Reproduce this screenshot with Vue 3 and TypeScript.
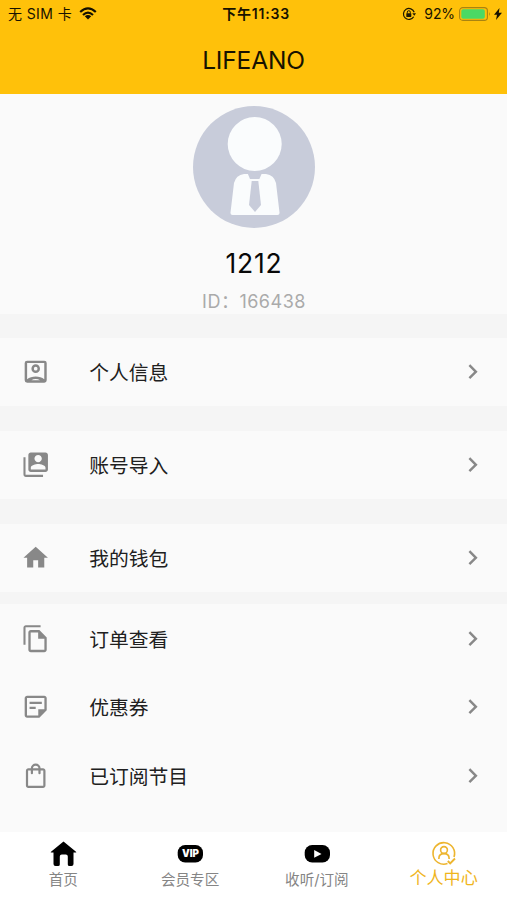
<script setup lang="ts">
type IconName = 'account' | 'accounts' | 'home' | 'orders' | 'coupon' | 'bag'
interface Item { label: string; icon: IconName }

const groups: Item[][] = [
  [{ label: '个人信息', icon: 'account' }],
  [{ label: '账号导入', icon: 'accounts' }],
  [{ label: '我的钱包', icon: 'home' }],
  [
    { label: '订单查看', icon: 'orders' },
    { label: '优惠券', icon: 'coupon' },
    { label: '已订阅节目', icon: 'bag' },
  ],
]

const icons: Record<IconName, string> = {
  account:
    'M19 3H5a2 2 0 0 0-2 2v14a2 2 0 0 0 2 2h14a2 2 0 0 0 2-2V5a2 2 0 0 0-2-2zM8.5 19c1-.65 2.2-1 3.5-1s2.500.35 3.500 1zM19 18.100C17.200 16.800 14.700 16 12 16s-5.200.8-7 2.100V5h14zM12 13a3.500 3.500 0 1 0 0-7 3.500 3.500 0 0 0 0 7zm0-5a1.500 1.500 0 1 1 0 3 1.500 1.500 0 0 1 0-3z',
  accounts:
    'M3.700 6H2v14c0 1.100.9 2 2 2h14v-1.700H3.700zM20 2H8c-1.100 0-2 .9-2 2v12c0 1.100.9 2 2 2h12c1.100 0 2-.9 2-2V4c0-1.100-.9-2-2-2zm-6 2c1.660 0 3 1.340 3 3s-1.340 3-3 3-3-1.340-3-3 1.340-3 3-3zm6 12H8v-1.500c0-1.990 4-3 6-3s6 1.010 6 3z',
  home: 'M10 20v-6h4v6h5v-8h3L12 3 2 12h3v8z',
  orders:
    'M16 1H4C2.900 1 2 1.900 2 3v14h1.700V2.700H16zM15 5H8c-1.100 0-2 .9-2 2v14c0 1.100.9 2 2 2h11c1.100 0 2-.9 2-2V11zM7.900 21.100V6.900H14V12h5.100v9.100z',
  coupon:
    'M19 3H5c-1.100 0-2 .9-2 2v14c0 1.100.9 2 2 2h10l6-6V5c0-1.100-.9-2-2-2zM4.900 19.100V4.900h14.200V14h-5v5.100zM7 8h10v1.800H7zM7 12h5v1.800H7z',
  bag:
    'M18 6h-2a4 4 0 0 0-8 0H6c-1.100 0-2 .9-2 2v12c0 1.100.9 2 2 2h12c1.100 0 2-.9 2-2V8c0-1.100-.9-2-2-2zM12 3.800a2.200 2.200 0 0 1 2.200 2.200H9.800a2.200 2.200 0 0 1 2.200-2.200zM18.200 20.200H5.800V7.800H8V10a.9.9 0 0 0 1.800 0V7.800h4.400V10a.9.9 0 0 0 1.800 0V7.800h2.200z',
}
</script>

<template>
  <div class="screen">
    <header class="header">
      <div class="status">
        <div class="status-left">
          <span class="carrier">无 SIM 卡</span>
          <svg class="wifi" viewBox="0 0 18 13">
            <g fill="none" stroke="#141000" stroke-width="2.200">
              <path d="M1.200 5Q9-2.200 16.800 5" />
              <path d="M4 8Q9 3.400 14 8" />
            </g>
            <path d="M5.800 9.300Q9 6.900 12.200 9.300L9 12.500z" fill="#141000" />
          </svg>
        </div>
        <div class="clock">下午11:33</div>
        <div class="status-right">
          <svg class="lock" viewBox="0 0 14 14">
            <path d="M11.700 9.800A5.500 5.500 0 1 1 12.200 5.300" fill="none" stroke="#1c1600" stroke-width="1.200" />
            <path d="M10.300 6.300h3.700l-1.700 2.500z" fill="#1c1600" />
            <rect x="4.300" y="6.300" width="5" height="3.700" rx=".4" fill="#1c1600" />
            <path d="M5.300 6.500V5.200a1.500 1.500 0 0 1 3 0v1.300" fill="none" stroke="#1c1600" stroke-width="1" />
          </svg>
          <span class="percent">92%</span>
          <svg class="battery" viewBox="0 0 32 14">
            <rect x=".6" y=".6" width="27.800" height="12.800" rx="3.200" fill="none" stroke="#a98311" stroke-width="1.100" />
            <rect x="2.300" y="2.200" width="23.500" height="9.600" rx="1.800" fill="#4bd964" />
            <path d="M30 5q1.700 2 0 4z" fill="#a98311" />
          </svg>
          <svg class="bolt" viewBox="0 0 8 12"><path d="M5.500 0 0 6.800h3L2 12l6-7.200H4.800z" fill="#171200" /></svg>
        </div>
      </div>
      <h1 class="title">LIFEANO</h1>
    </header>

    <section class="profile">
      <svg class="avatar" viewBox="0 0 122 122">
        <circle cx="61" cy="61" r="61" fill="#c8ccda" />
        <circle cx="61.700" cy="38" r="27" fill="#fafcfd" />
        <path d="M51 68q-8 1-10 9l-3.500 29.500q-.3 2.500 2 2.500h45q2.300 0 2-2.500L83 77q-2-8-10-9z" fill="#fafcfd" />
        <path d="M54.500 67h14.500l-2.600 6H57z" fill="#c8ccda" />
        <path d="M58.700 75h6.600l2.700 24-6 7-6-7z" fill="#c8ccda" />
      </svg>
      <div class="name">1212</div>
      <div class="user-id">ID：166438</div>
    </section>

    <main class="menu">
      <section v-for="(group, i) in groups" :key="i" class="group">
        <div v-for="item in group" :key="item.label" class="row">
          <svg class="row-icon" viewBox="0 0 24 24"><path :d="icons[item.icon]" fill-rule="evenodd" /></svg>
          <span class="row-label">{{ item.label }}</span>
          <svg class="chevron" viewBox="0 0 24 24">
            <path d="M10 6 8.590 7.410 13.170 12l-4.580 4.590L10 18l6-6z" />
          </svg>
        </div>
      </section>
    </main>

    <nav class="tabs">
      <div class="tab">
        <svg class="tab-icon" viewBox="0 0 28 28">
          <path d="M14.500 1.500 27 11.700q.8.900-.4.900H24.500V24q0 2-2 2h-2q-1.700 0-1.700-1.500V16.500q0-2-2-2h-4q-2 0-2 2v8q0 1.500-1.700 1.500H6.500q-2 0-2-2V12.600H2.400q-1.200 0-.4-.9z" />
        </svg>
        <span>首页</span>
      </div>
      <div class="tab">
        <svg class="tab-icon" viewBox="0 0 28 28">
          <rect x="1.700" y="5" width="25.300" height="17.500" rx="7.500" />
          <text class="vip" x="14.400" y="17.300" text-anchor="middle" textLength="17" lengthAdjust="spacingAndGlyphs">VIP</text>
        </svg>
        <span>会员专区</span>
      </div>
      <div class="tab">
        <svg class="tab-icon" viewBox="0 0 28 28">
          <rect x="1.700" y="5" width="25.300" height="17.500" rx="7.500" />
          <path d="m11.200 10 7.300 3.900-7.300 3.900z" fill="#fff" />
        </svg>
        <span>收听/订阅</span>
      </div>
      <div class="tab active">
        <svg class="tab-icon" viewBox="0 0 28 28" fill="none" stroke="#edb52f" stroke-width="1.600">
          <path d="M17.500 23.600A10.800 10.800 0 1 1 24 17" />
          <circle cx="14" cy="10" r="3.400" />
          <path d="M8.900 19v-.7q0-4.700 5.100-4.700t5.100 4.700v.7" />
          <path d="m17.800 21 2.400 2.500 4.800-5" stroke-width="1.900" />
        </svg>
        <span>个人中心</span>
      </div>
    </nav>
  </div>
</template>

<style>
body { background: #fafafa; }
</style>

<style scoped>
.screen {
  width: 507px;
  height: 900px;
  display: flex;
  flex-direction: column;
  overflow: hidden;
  background: #fafafa;
  font-family: Inter, "Noto Sans CJK SC", sans-serif;
  color: #202020;
}
.header { height: 93.500px; flex: none; background: #ffc10a; color: #171200; }
.status {
  height: 27px;
  display: grid;
  grid-template-columns: 1fr auto 1fr;
  align-items: center;
  padding: 0 5px 0 8px;
  font-size: 14px;
  line-height: 20px;
}
.status-left, .status-right { display: flex; align-items: center; }
.status-right { justify-content: flex-end; }
.carrier { letter-spacing: .4px; }
.wifi { width: 18px; height: 13px; margin-left: 6.500px; }
.clock { font-weight: 600; letter-spacing: .8px; margin-left: 2px; }
.lock { width: 14px; height: 14px; margin-right: 8px; }
.percent { letter-spacing: -.1px; }
.battery { width: 32px; height: 14px; margin: 0 3px 0 4px; }
.bolt { width: 8px; height: 12px; }
.title { margin: 15px 0 0; text-align: center; font-weight: 400; font-size: 24.500px; line-height: 36px; letter-spacing: -.15px; }

.profile {
  height: 220px;
  flex: none;
  display: flex;
  flex-direction: column;
  align-items: center;
  padding-top: 12.500px;
  box-sizing: border-box;
}
.avatar { width: 122px; height: 122px; flex: none; }
.name { margin-top: 16px; padding-left: 1px; font-size: 26.500px; line-height: 38px; letter-spacing: .8px; color: #080808; }
.user-id { margin-top: 7px; padding-left: 1px; font-size: 18px; line-height: 26px; letter-spacing: .5px; color: #aaa; white-space: nowrap; }

.menu { flex: 1; min-height: 0; display: flex; flex-direction: column; padding-top: 24.200px; box-sizing: border-box; background: #f5f5f5; }
.group { flex: none; margin-bottom: 24.500px; background: #fafafa; }
.group:nth-child(3) { margin-bottom: 12.100px; }
.group:last-child { flex: 1; margin-bottom: 0; }
.row { height: 68.500px; display: flex; align-items: center; padding: 0 19.500px 0 20.600px; }
.row-icon, .chevron { width: 29.400px; height: 29.400px; flex: none; fill: #888; }
.row-label { flex: 1; margin-left: 39.200px; padding-top: 2px; font-size: 19.800px; line-height: 28px; }

.tabs { height: 68px; flex: none; display: grid; grid-template-columns: repeat(4, 1fr); background: #fff; }
.tab { display: flex; flex-direction: column; align-items: center; padding-top: 8px; font-size: 14.600px; line-height: 22px; color: #858585; }
.tab-icon { width: 28px; height: 28px; flex: none; }
.tab span { margin-top: 1px; white-space: nowrap; }
.vip { font: 900 10px Inter, sans-serif; fill: #fff; }
.active { color: #f0b51d; font-size: 17.100px; }
.active span { margin-top: -1px; }
</style>
